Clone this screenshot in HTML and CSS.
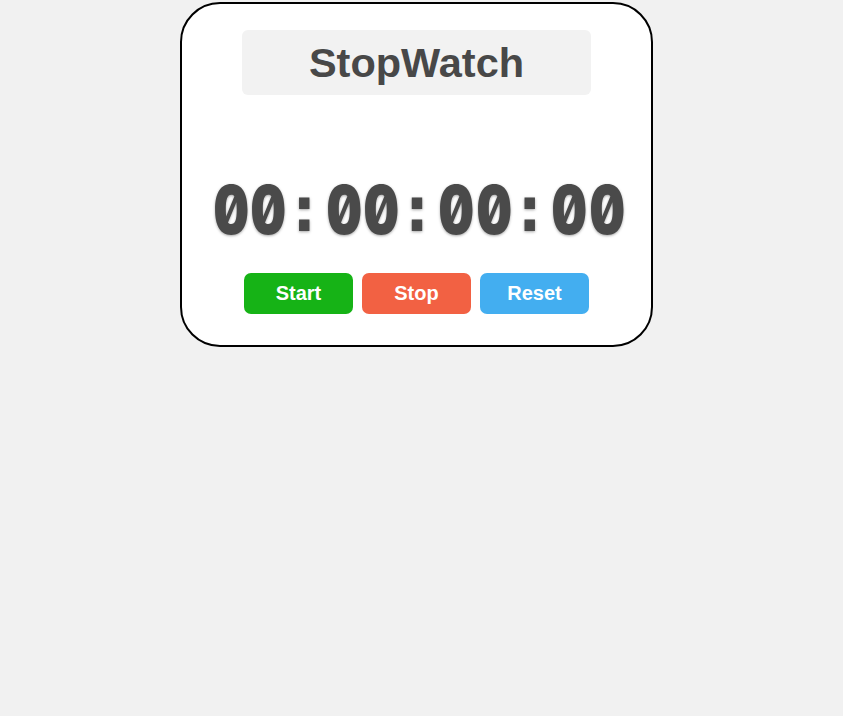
FILE: index.html
```html
<!DOCTYPE html>
<html>
<head>
<meta charset="utf-8">
<link rel="stylesheet" href="styles.css">
</head>
<body>
<div class="card">
  <div class="title">StopWatch</div>
  <div class="time"><span class="ch">0</span><span class="ch">0</span><span class="ch colon">:</span><span class="ch">0</span><span class="ch">0</span><span class="ch colon">:</span><span class="ch">0</span><span class="ch">0</span><span class="ch colon">:</span><span class="ch">0</span><span class="ch">0</span></div>
  <div class="buttons">
    <button class="btn start">Start</button>
    <button class="btn stop">Stop</button>
    <button class="btn reset">Reset</button>
  </div>
</div>
</body>
</html>
```
FILE: styles.css
```css
html, body {
  margin: 0;
  padding: 0;
  background: #f1f1f1;
}
body {
  padding-top: 2px;
  font-family: "Liberation Sans", Arial, sans-serif;
}
.card {
  box-sizing: border-box;
  width: 473px;
  height: 345px;
  margin-left: 180px;
  background: #fff;
  border: 2px solid #000;
  border-radius: 40px;
  display: flex;
  flex-direction: column;
  align-items: center;
  padding-top: 26px;
}
.title {
  width: 349px;
  height: 65px;
  background: #f2f2f2;
  border-radius: 6px;
  display: flex;
  align-items: center;
  justify-content: center;
  font-size: 41.5px;
  font-weight: bold;
  color: #484848;
}
.time {
  margin-top: 78px;
  display: flex;
  font-family: Inter, "DejaVu Sans Mono", monospace;
  font-feature-settings: "zero" 1, "tnum" 1;
  font-weight: 900;
  font-size: 68px;
  line-height: 72px;
  color: #4a4a4a;
  text-shadow: 0 1px 3px rgba(0,0,0,0.35);
}
.ch {
  display: inline-block;
  width: 37.6px;
  text-align: center;
  transform: scaleX(0.8);
}
.colon {
  font-family: "DejaVu Sans Mono", monospace;
  font-size: 64px;
  font-weight: bold;
  transform: none;
}
.buttons {
  margin-top: 28px;
  display: flex;
  gap: 9px;
}
.btn {
  width: 109px;
  height: 41px;
  border: none;
  border-radius: 7px;
  color: #fff;
  font-family: "Liberation Sans", Arial, sans-serif;
  font-weight: bold;
  font-size: 20px;
  padding: 0;
}
.start { background: #16b316; }
.stop { background: #f26143; }
.reset { background: #43aef0; }
```
